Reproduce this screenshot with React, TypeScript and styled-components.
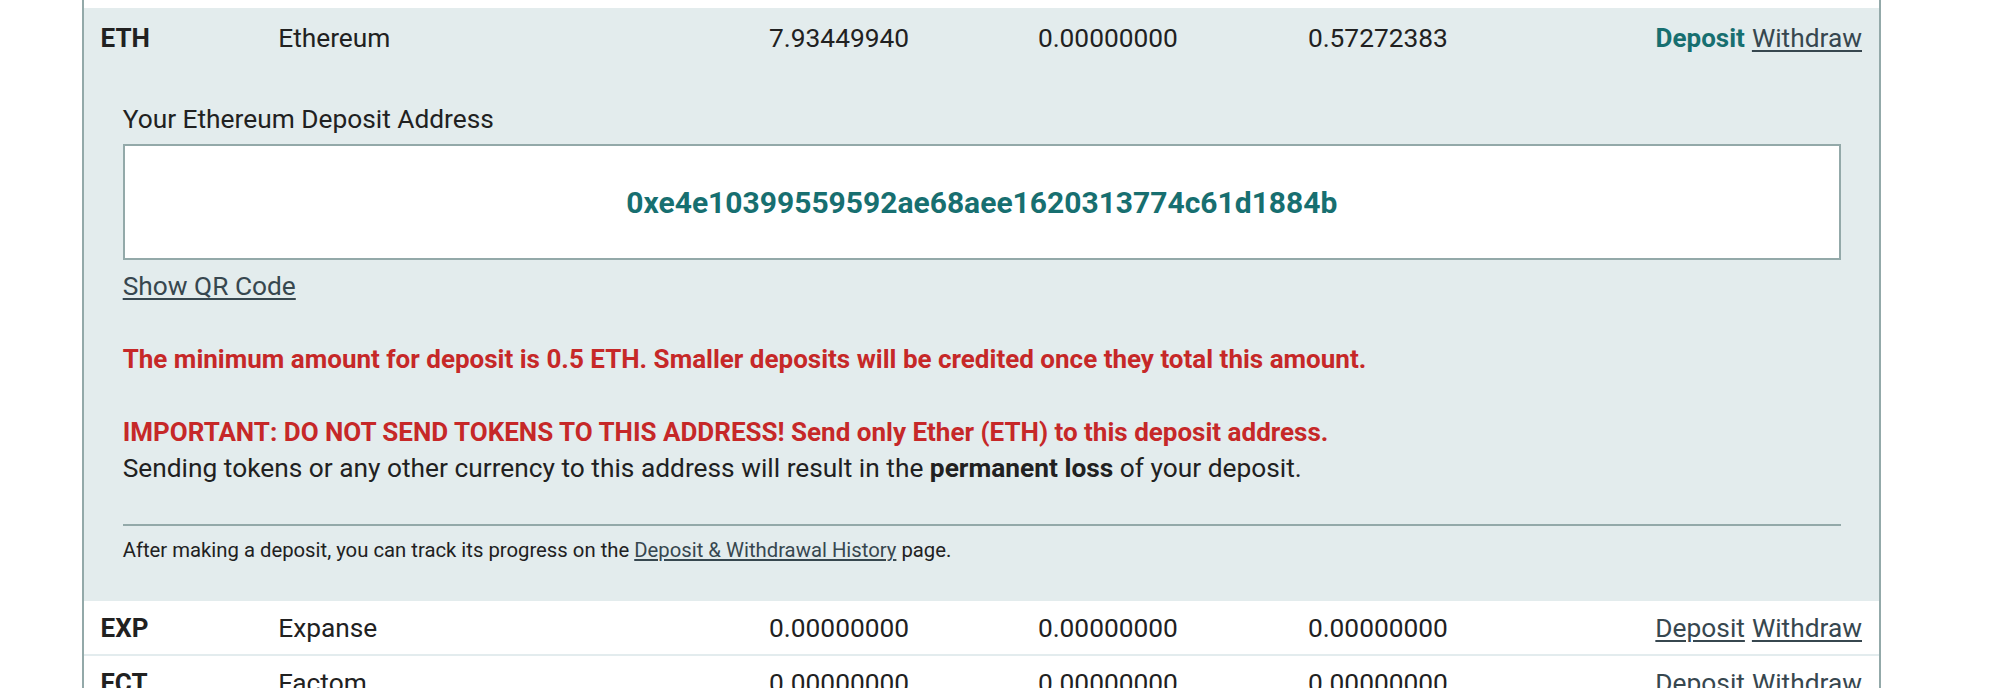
import React from "react";
import styled, { createGlobalStyle, css } from "styled-components";

const GlobalStyle = createGlobalStyle`
  html, body { margin: 0; padding: 0; background: #ffffff; }
  body {
    font-family: Roboto, "Noto Sans", "Liberation Sans", sans-serif;
    color: #212121;
  }
`;

const COLORS = {
  border: "#93a9a9",
  panel: "#e3eced",
  rowLine: "#e3ecee",
  teal: "#176f70",
  red: "#c62828",
  link: "#37474f",
  text: "#212121",
};

const Page = styled.div`
  padding-left: 82px;
`;

const Table = styled.div`
  box-sizing: border-box;
  width: 1799px;
  padding-top: 8px;
  border-left: 2px solid ${COLORS.border};
  border-right: 2px solid ${COLORS.border};
  font-size: 26.3px;
  line-height: 36.4px;
`;

const Row = styled.div<{ $active?: boolean }>`
  display: grid;
  grid-template-columns: 177.6px 490.9px 268.8px 270px 1fr auto;
  align-items: baseline;
  padding: 9px 17px 7px 16.6px;
  border-bottom: 2px solid ${COLORS.rowLine};
  ${(p) =>
    p.$active &&
    css`
      background: ${COLORS.panel};
      padding-top: 11.5px;
      border-bottom: none;
    `}
`;

const Code = styled.div`
  font-weight: 700;
  font-size: 26px;
`;

const Cell = styled.div``;

const Actions = styled.div`
  display: flex;
  gap: 7px;
  justify-content: flex-end;
`;

const ActionLink = styled.a<{ $current?: boolean }>`
  color: ${COLORS.link};
  text-decoration: underline;
  text-underline-offset: 3px;
  text-decoration-thickness: 2px;
  cursor: pointer;
  ${(p) =>
    p.$current &&
    css`
      color: ${COLORS.teal};
      font-weight: 700;
      font-size: 26px;
      text-decoration: none;
    `}
`;

const Panel = styled.div`
  background: ${COLORS.panel};
  padding: 37.7px 38px 36px 38.7px;
`;

const Label = styled.div`
  margin-bottom: 7px;
`;

const AddressBox = styled.div`
  box-sizing: border-box;
  height: 116px;
  border: 2px solid ${COLORS.border};
  background: #ffffff;
  padding-top: 36px;
  text-align: center;
  font-size: 30px;
  line-height: 42px;
  font-weight: 700;
  color: ${COLORS.teal};
`;

const QrLink = styled.a`
  display: inline-block;
  margin-top: 8px;
  color: ${COLORS.link};
  text-decoration: underline;
  text-underline-offset: 3px;
  text-decoration-thickness: 2px;
  cursor: pointer;
`;

const Notice = styled.p<{ $tone?: "red" | "plain" }>`
  margin: 36.4px 0 0;
  ${(p) =>
    p.$tone === "red" &&
    css`
      color: ${COLORS.red};
      font-weight: 700;
      font-size: 26px;
    `}
`;

const Warning = styled.span`
  display: block;
  color: ${COLORS.red};
  font-weight: 700;
  font-size: 26px;
`;

const Divider = styled.hr`
  margin: 38px 0 0;
  border: none;
  border-top: 2px solid ${COLORS.border};
  height: 0;
`;

const SmallNote = styled.div`
  margin-top: 10px;
  font-size: 20.3px;
  line-height: 29px;
`;

const NoteLink = styled.a`
  color: ${COLORS.link};
  text-decoration: underline;
  text-underline-offset: 2px;
  cursor: pointer;
`;

type Coin = {
  code: string;
  name: string;
  balance: string;
  onOrders: string;
  btcValue: string;
};

const coins: Coin[] = [
  { code: "ETH", name: "Ethereum", balance: "7.93449940", onOrders: "0.00000000", btcValue: "0.57272383" },
  { code: "EXP", name: "Expanse", balance: "0.00000000", onOrders: "0.00000000", btcValue: "0.00000000" },
  { code: "FCT", name: "Factom", balance: "0.00000000", onOrders: "0.00000000", btcValue: "0.00000000" },
];

function CoinRow({ coin, active }: { coin: Coin; active?: boolean }) {
  return (
    <Row $active={active}>
      <Code>{coin.code}</Code>
      <Cell>{coin.name}</Cell>
      <Cell>{coin.balance}</Cell>
      <Cell>{coin.onOrders}</Cell>
      <Cell>{coin.btcValue}</Cell>
      <Actions>
        <ActionLink $current={active}>Deposit</ActionLink>
        <ActionLink>Withdraw</ActionLink>
      </Actions>
    </Row>
  );
}

function DepositPanel() {
  return (
    <Panel>
      <Label>Your Ethereum Deposit Address</Label>
      <AddressBox>0xe4e10399559592ae68aee1620313774c61d1884b</AddressBox>
      <QrLink>Show QR Code</QrLink>
      <Notice $tone="red">
        The minimum amount for deposit is 0.5 ETH. Smaller deposits will be credited once they total this amount.
      </Notice>
      <Notice>
        <Warning>
          IMPORTANT: DO NOT SEND TOKENS TO THIS ADDRESS! Send only Ether (ETH) to this deposit address.
        </Warning>
        Sending tokens or any other currency to this address will result in the <b>permanent loss</b> of your
        deposit.
      </Notice>
      <Divider />
      <SmallNote>
        After making a deposit, you can track its progress on the <NoteLink>Deposit &amp; Withdrawal History</NoteLink>{" "}
        page.
      </SmallNote>
    </Panel>
  );
}

export default function App() {
  return (
    <>
      <GlobalStyle />
      <Page>
        <Table>
          <CoinRow coin={coins[0]} active />
          <DepositPanel />
          <CoinRow coin={coins[1]} />
          <CoinRow coin={coins[2]} />
        </Table>
      </Page>
    </>
  );
}
